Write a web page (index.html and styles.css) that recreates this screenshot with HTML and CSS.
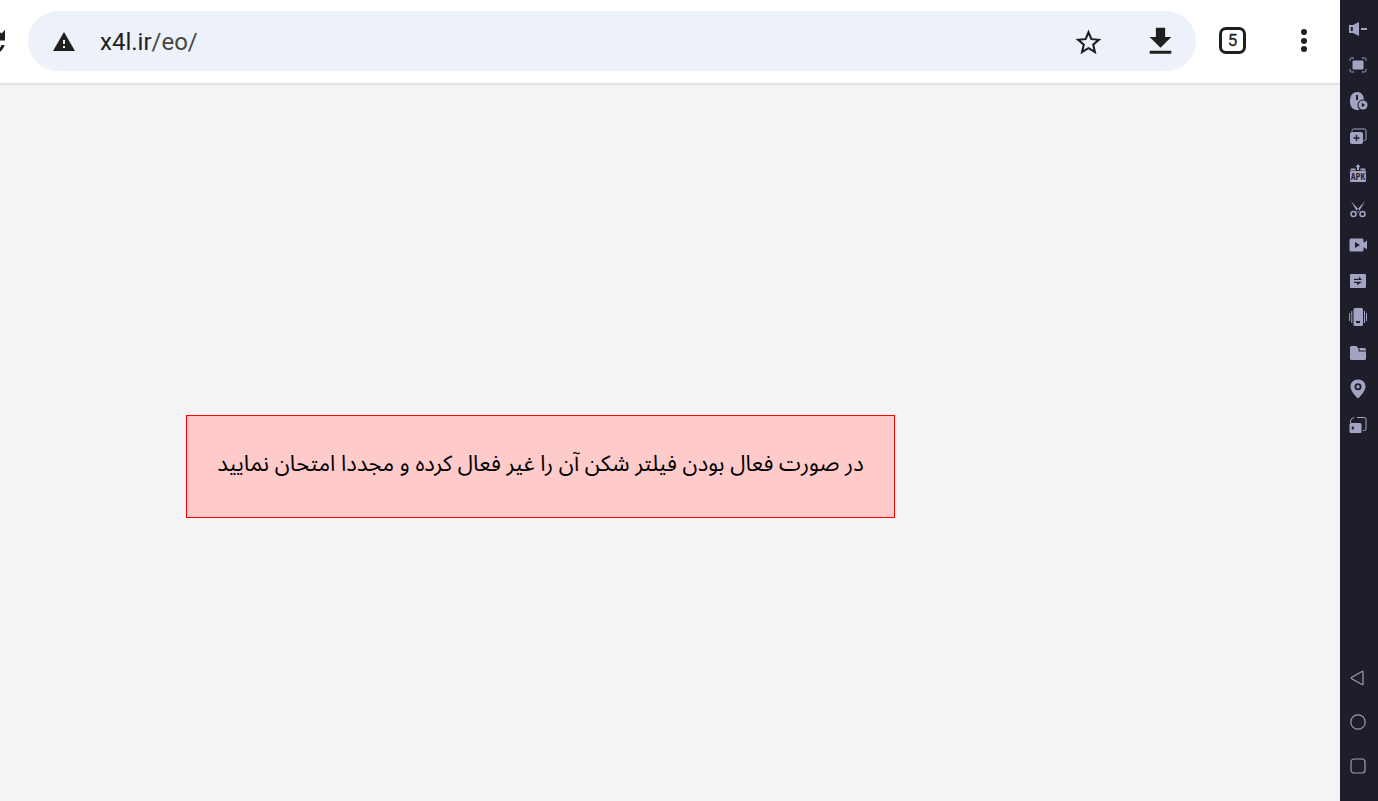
FILE: index.html
```html
<!DOCTYPE html>
<html lang="fa">
<head>
<meta charset="utf-8">
<title>x4l.ir/eo/</title>
<link rel="stylesheet" href="styles.css">
</head>
<body>
<div class="screen">
  <main class="browser">
    <header class="toolbar">
      <svg class="reload" viewBox="16.67 0 3.33 24" fill="currentColor"><path d="M17.65 6.35C16.2 4.9 14.21 4 12 4c-4.42 0-7.99 3.58-7.99 8s3.57 8 7.99 8c3.73 0 6.84-2.55 7.73-6h-2.08c-.82 2.33-3.04 4-5.65 4-3.31 0-6-2.69-6-6s2.69-6 6-6c1.66 0 3.14.69 4.22 1.78L13 11h7V4l-2.35 2.35z"/></svg>
      <div class="omnibox">
        <svg class="warn" viewBox="0 0 24 24" fill="currentColor"><path d="M1 21h22L12 2 1 21zm12-3h-2v-2h2v2zm0-4h-2v-4h2v4z"/></svg>
        <div class="url"><span class="host">x4l.ir</span>/eo/</div>
        <svg class="star" viewBox="0 0 24 24" fill="currentColor"><path d="M22 9.24l-7.19-.62L12 2 9.19 8.63 2 9.24l5.46 4.73L5.82 21 12 17.27 18.18 21l-1.63-7.03L22 9.24zM12 15.4l-3.76 2.27 1-4.28-3.32-2.88 4.38-.38L12 6.1l1.71 4.04 4.38.38-3.32 2.88 1 4.28L12 15.4z"/></svg>
        <svg class="download" viewBox="0 0 24 24" fill="currentColor"><path d="M19 9h-4V3H9v6H5l7 7 7-7zM5 18v2h14v-2H5z"/></svg>
      </div>
      <div class="tabs">5</div>
      <div class="menu"><i></i><i></i><i></i></div>
    </header>
    <section class="content">
      <div class="notice" dir="rtl">در صورت فعال بودن فیلتر شکن آن را غیر فعال کرده و مجددا امتحان نمایید</div>
    </section>
  </main>
  <aside class="rail">
    <div class="rail-group">
      <div class="rail-item"><svg class="ico" viewBox="0 0 18 18"><path d="M0 5h4L10 2v14l-6-3H0zM1.800 7v4h2V7z" fill-rule="evenodd"/><rect x="12" y="8" width="6" height="2"/></svg></div>
      <div class="rail-item"><svg class="ico" viewBox="0 0 18 18"><rect x="3.500" y="4.500" width="11" height="9" rx="1"/><path class="line thin" d="M1 5V3.500Q1 2 2.500 2H5M13 2h2.500Q17 2 17 3.500V5M17 13v1.500q0 1.500-1.500 1.500H13M5 16H2.500Q1 16 1 14.500V13"/></svg></div>
      <div class="rail-item"><svg class="ico" viewBox="0 0 18 18"><path fill-rule="evenodd" d="M8 0c4 0 6.500 2.500 7 7.500-3.500-.5-6.500 2-6.500 5.500 0 2 .8 3.500 2 4.500-1 .4-1.600.5-2.500.5-4.500 0-7-3.500-7-9S3.500 0 8 0zM7 3v5h2V3z"/><circle cx="14" cy="13" r="4.500"/><path class="cut" d="M12.800 10.800v4.400l3.400-2.200z"/></svg></div>
      <div class="rail-item"><svg class="ico" viewBox="0 0 18 18"><path class="line thin" d="M3 3.500V2.500Q3 1 4.500 1h11Q17 1 17 2.500V11q0 1.500-1.500 1.500H14.500"/><rect x="1" y="4" width="13" height="12" rx="2"/><path class="cut" d="M6.800 7h1.400v2.300h2.300v1.400H8.200V13H6.800v-2.300H4.500V9.300h2.300z"/></svg></div>
      <div class="rail-item"><svg class="ico" viewBox="0 0 18 18"><path d="M9 0l2.500 3H10v3H8V3H6.500zM2 4.500h4.500v2h5v-2H16l1 2H1z"/><rect x="1" y="7" width="16" height="11" rx="1"/><text class="apk" x="9" y="15.700" text-anchor="middle">APK</text></svg></div>
      <div class="rail-item"><svg class="ico" viewBox="0 0 18 18"><path d="M2 1l8.500 9.500-2 2zM16 1L7.500 10.500l2 2z"/><circle class="line" cx="4.500" cy="14" r="2.500"/><circle class="line" cx="13.500" cy="14" r="2.500"/></svg></div>
      <div class="rail-item"><svg class="ico" viewBox="0 0 18 18"><path fill-rule="evenodd" d="M2 2.500h11q1.500 0 1.500 1.500v3L18 4.500v9L14.500 11v3q0 1.500-1.500 1.500H2Q.500 15.500 .500 14V4Q.500 2.500 2 2.500zm4 3.500v6l5-3z"/></svg></div>
      <div class="rail-item"><svg class="ico" viewBox="0 0 18 18"><path fill-rule="evenodd" d="M2 2h14q1 0 1 1v12q0 1-1 1H2q-1 0-1-1V3q0-1 1-1zm8 2.500v2.200H5V8h8zM5 9.700V11h3v2.200l5-3.500z"/></svg></div>
      <div class="rail-item"><svg class="ico" viewBox="0 0 18 18"><path fill-rule="evenodd" d="M6 0h6.500Q14 0 14 1.500v15q0 1.500-1.500 1.500H6Q4.500 18 4.500 16.500v-15Q4.500 0 6 0zm1 13v2h4v-2z"/><path class="line thin" d="M2.800 3v12M.600 5v8M15.500 3v12M17.500 5v8"/></svg></div>
      <div class="rail-item"><svg class="ico" viewBox="0 0 18 18"><path d="M1 3.500Q1 2 2.500 2h4.700L9.500 4.500v3H17v7q0 1.500-1.500 1.500h-13Q1 16 1 14.500zM10.500 4h5Q17 4 17 5.500V6.500h-6.500z"/></svg></div>
      <div class="rail-item"><svg class="ico" viewBox="0 0 18 18"><path fill-rule="evenodd" d="M9 -.500c4.500 0 7.500 3 7.500 7 0 4-3.500 8-7.500 12-4-4-7.500-8-7.500-12 0-4 3-7 7.500-7zm0 3.700a3.500 3.500 0 1 0 0 7 3.500 3.500 0 0 0 0-7zm0 1.800a1.700 1.700 0 1 1 0 3.400 1.700 1.700 0 0 1 0-3.400z"/></svg></div>
      <div class="rail-item"><svg class="ico" viewBox="0 0 18 18"><path class="line thin" d="M8 1.500h7.500Q17 1.500 17 3v10q0 1.500-1.500 1.500H14M1.500 7V5Q1.500 2.500 5 1.500"/><path fill-rule="evenodd" d="M2 7h9q1.500 0 1.500 1.500v7.500q0 1-1 1H2Q.500 17 .500 15.500v-7Q.500 7 2 7zm.800 3.500v3h2v-3z"/></svg></div>
    </div>
    <div class="rail-group">
      <div class="nav-item"><svg class="nav" viewBox="0 0 16 16"><path d="M13 2v12q0 1-1 .5L1.800 8.700q-1-.7 0-1.400L12 1.500q1-.5 1 .5z"/></svg></div>
      <div class="nav-item"><svg class="nav" viewBox="0 0 16 16"><circle cx="8" cy="8" r="7.200"/></svg></div>
      <div class="nav-item"><svg class="nav" viewBox="0 0 16 16"><rect x="1" y="1" width="14" height="14" rx="3"/></svg></div>
    </div>
  </aside>
</div>
</body>
</html>
```
FILE: styles.css
```css
* { box-sizing: border-box; }
html, body { margin: 0; height: 100%; overflow: hidden; }
.screen { display: flex; width: 1378px; height: 801px; }

.browser { flex: none; width: 1340px; display: flex; flex-direction: column; background: #f4f4f4; }

.toolbar {
  flex: none; height: 85px; display: flex; align-items: flex-start;
  padding-top: 11px; background: #fff; border-bottom: 2px solid #e2e2e2; color: #1f1f1f;
}
.reload { flex: none; width: 5px; height: 36px; margin: 13px 23px 0 0; }
.omnibox {
  flex: none; width: 1168px; height: 60px; display: flex; align-items: center;
  padding-left: 24px; background: #ecf1fa; border-radius: 30px;
}
.warn { flex: none; width: 24px; height: 24px; margin-top: 2px; }
.url {
  flex: 1; margin: 2px 0 0 24px; color: #444746;
  font: 24px/30px Roboto, sans-serif;
}
.host { color: #1f1f1f; }
.star { flex: none; width: 31px; height: 31px; margin: 2px 38px 0 0; }
.download { flex: none; width: 37px; height: 37px; margin-right: 17px; }
.tabs {
  flex: none; width: 27px; height: 27px; margin: 16px 0 0 23px;
  border: 3px solid #1f1f1f; border-radius: 7px;
  font: 400 17px/21px "Liberation Sans Narrow", Roboto, sans-serif; text-align: center;
  -webkit-text-stroke: 0.3px #1f1f1f;
}
.menu { flex: none; display: flex; flex-direction: column; gap: 2.500px; margin: 18px 0 0 55px; }
.menu i { display: block; width: 6px; height: 6px; border-radius: 50%; background: #1f1f1f; }

.content { flex: 1; padding: 330px 0 0 186px; }
.notice {
  width: 709px; height: 103px; padding: 29px 30px 0;
  background: #ffcaca; border: 1px solid #f00; color: #000;
  font: 22.050px/38px "Noto Sans Arabic", "Noto Naskh Arabic", Vazirmatn, "DejaVu Sans", sans-serif; text-align: center; white-space: nowrap;
}

.rail {
  flex: none; width: 38px; display: flex; flex-direction: column; justify-content: space-between;
  padding: 11px 2px 13px 0; background: #1e1e2a;
}
.rail-group { display: flex; flex-direction: column; }
.rail-item { height: 36px; display: flex; align-items: center; justify-content: center; }
.nav-item { height: 44px; display: flex; align-items: center; justify-content: center; }
.ico { width: 18px; height: 18px; fill: #a5a3c2; overflow: visible; }
.ico .line { fill: none; stroke: #a5a3c2; stroke-width: 1.500; }
.ico .thin { stroke-width: 1; }
.ico .cut { fill: #1e1e2a; }
.ico .apk { font: 700 8px "DejaVu Sans Mono", monospace; fill: #1e1e2a; }
.nav { width: 16px; height: 16px; fill: none; stroke: #9d9bb8; stroke-width: 1.200; }
```
